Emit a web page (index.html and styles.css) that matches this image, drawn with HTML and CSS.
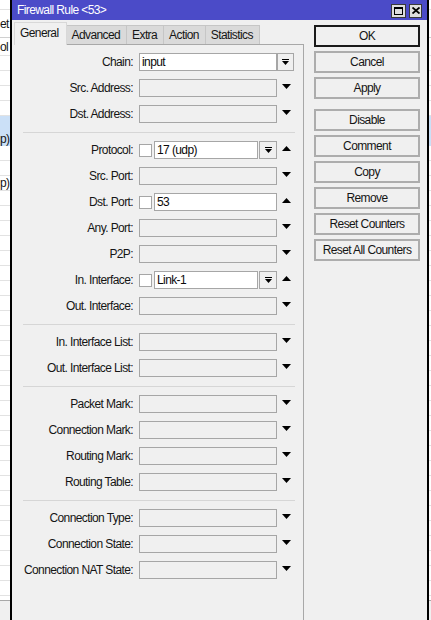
FILE: index.html
```html
<!DOCTYPE html>
<html>
<head>
<meta charset="utf-8">
<link rel="stylesheet" href="styles.css">
</head>
<body>
<div class="desk">
  <div class="strip left">
    <div class="srow top"></div>
    <div class="srow head"><span>et</span></div>
    <div class="srow h16"><span>ol</span></div>
    <div class="srow"></div>
    <div class="srow"></div>
    <div class="srow"></div>
    <div class="srow"></div>
    <div class="srow sel nob"></div>
    <div class="srow sel"><span>p)</span></div>
    <div class="srow"></div>
    <div class="srow"></div>
    <div class="srow"><span>p)</span></div>
    <div class="sfill"></div>
    <div class="sbottom"></div>
  </div>

  <div class="win">
    <div class="titlebar">
      <span class="title">Firewall Rule &lt;53&gt;</span>
      <div class="wbtns">
        <span class="wbtn max"><svg width="9" height="8" viewBox="0 0 9 8"><path d="M0 0H9V8H0Z M1 2V7H8V2Z" fill="#000" fill-rule="evenodd"/></svg></span>
        <span class="wbtn close"><svg width="8" height="7" viewBox="0 0 8 7"><path d="M0.5 0.5L7.5 6.5M7.5 0.5L0.5 6.5" stroke="#000" stroke-width="1.8"/></svg></span>
      </div>
    </div>
    <div class="body">
      <div class="tabsarea">
        <div class="tabs">
          <div class="tab active">General</div>
          <div class="tab">Advanced</div>
          <div class="tab">Extra</div>
          <div class="tab">Action</div>
          <div class="tab">Statistics</div>
        </div>
        <div class="panel">
          <div class="row">
            <div class="lbl">Chain:</div>
            <div class="fld"><div class="inp">input</div></div>
            <div class="aux start"><div class="ddb"><svg width="7" height="6" viewBox="0 0 7 6"><rect x="0" y="0" width="7" height="1"/><path d="M0 2H7L3.5 6Z"/></svg></div></div>
          </div>
          <div class="row">
            <div class="lbl">Src. Address:</div>
            <div class="fld"><div class="inp empty"></div></div>
            <div class="aux"><svg class="tri" width="9" height="5" viewBox="0 0 9 5"><path d="M0 0H9L4.5 5Z"/></svg></div>
          </div>
          <div class="row">
            <div class="lbl">Dst. Address:</div>
            <div class="fld"><div class="inp empty"></div></div>
            <div class="aux"><svg class="tri" width="9" height="5" viewBox="0 0 9 5"><path d="M0 0H9L4.5 5Z"/></svg></div>
          </div>
          <div class="sep"></div>
          <div class="row">
            <div class="lbl">Protocol:</div>
            <div class="fld"><div class="cb"></div><div class="inp">17 (udp)</div><div class="ddb in"><svg width="7" height="6" viewBox="0 0 7 6"><rect x="0" y="0" width="7" height="1"/><path d="M0 2H7L3.5 6Z"/></svg></div></div>
            <div class="aux"><svg class="tri" width="9" height="5" viewBox="0 0 9 5"><path d="M0 5H9L4.5 0Z"/></svg></div>
          </div>
          <div class="row">
            <div class="lbl">Src. Port:</div>
            <div class="fld"><div class="inp empty"></div></div>
            <div class="aux"><svg class="tri" width="9" height="5" viewBox="0 0 9 5"><path d="M0 0H9L4.5 5Z"/></svg></div>
          </div>
          <div class="row">
            <div class="lbl">Dst. Port:</div>
            <div class="fld"><div class="cb"></div><div class="inp">53</div></div>
            <div class="aux"><svg class="tri" width="9" height="5" viewBox="0 0 9 5"><path d="M0 5H9L4.5 0Z"/></svg></div>
          </div>
          <div class="row">
            <div class="lbl">Any. Port:</div>
            <div class="fld"><div class="inp empty"></div></div>
            <div class="aux"><svg class="tri" width="9" height="5" viewBox="0 0 9 5"><path d="M0 0H9L4.5 5Z"/></svg></div>
          </div>
          <div class="row">
            <div class="lbl">P2P:</div>
            <div class="fld"><div class="inp empty"></div></div>
            <div class="aux"><svg class="tri" width="9" height="5" viewBox="0 0 9 5"><path d="M0 0H9L4.5 5Z"/></svg></div>
          </div>
          <div class="row">
            <div class="lbl">In. Interface:</div>
            <div class="fld"><div class="cb"></div><div class="inp">Link-1</div><div class="ddb in"><svg width="7" height="6" viewBox="0 0 7 6"><rect x="0" y="0" width="7" height="1"/><path d="M0 2H7L3.5 6Z"/></svg></div></div>
            <div class="aux"><svg class="tri" width="9" height="5" viewBox="0 0 9 5"><path d="M0 5H9L4.5 0Z"/></svg></div>
          </div>
          <div class="row">
            <div class="lbl">Out. Interface:</div>
            <div class="fld"><div class="inp empty"></div></div>
            <div class="aux"><svg class="tri" width="9" height="5" viewBox="0 0 9 5"><path d="M0 0H9L4.5 5Z"/></svg></div>
          </div>
          <div class="sep"></div>
          <div class="row">
            <div class="lbl">In. Interface List:</div>
            <div class="fld"><div class="inp empty"></div></div>
            <div class="aux"><svg class="tri" width="9" height="5" viewBox="0 0 9 5"><path d="M0 0H9L4.5 5Z"/></svg></div>
          </div>
          <div class="row">
            <div class="lbl">Out. Interface List:</div>
            <div class="fld"><div class="inp empty"></div></div>
            <div class="aux"><svg class="tri" width="9" height="5" viewBox="0 0 9 5"><path d="M0 0H9L4.5 5Z"/></svg></div>
          </div>
          <div class="sep"></div>
          <div class="row">
            <div class="lbl">Packet Mark:</div>
            <div class="fld"><div class="inp empty"></div></div>
            <div class="aux"><svg class="tri" width="9" height="5" viewBox="0 0 9 5"><path d="M0 0H9L4.5 5Z"/></svg></div>
          </div>
          <div class="row">
            <div class="lbl">Connection Mark:</div>
            <div class="fld"><div class="inp empty"></div></div>
            <div class="aux"><svg class="tri" width="9" height="5" viewBox="0 0 9 5"><path d="M0 0H9L4.5 5Z"/></svg></div>
          </div>
          <div class="row">
            <div class="lbl">Routing Mark:</div>
            <div class="fld"><div class="inp empty"></div></div>
            <div class="aux"><svg class="tri" width="9" height="5" viewBox="0 0 9 5"><path d="M0 0H9L4.5 5Z"/></svg></div>
          </div>
          <div class="row">
            <div class="lbl">Routing Table:</div>
            <div class="fld"><div class="inp empty"></div></div>
            <div class="aux"><svg class="tri" width="9" height="5" viewBox="0 0 9 5"><path d="M0 0H9L4.5 5Z"/></svg></div>
          </div>
          <div class="sep"></div>
          <div class="row">
            <div class="lbl">Connection Type:</div>
            <div class="fld"><div class="inp empty"></div></div>
            <div class="aux"><svg class="tri" width="9" height="5" viewBox="0 0 9 5"><path d="M0 0H9L4.5 5Z"/></svg></div>
          </div>
          <div class="row">
            <div class="lbl">Connection State:</div>
            <div class="fld"><div class="inp empty"></div></div>
            <div class="aux"><svg class="tri" width="9" height="5" viewBox="0 0 9 5"><path d="M0 0H9L4.5 5Z"/></svg></div>
          </div>
          <div class="row">
            <div class="lbl">Connection NAT State:</div>
            <div class="fld"><div class="inp empty"></div></div>
            <div class="aux"><svg class="tri" width="9" height="5" viewBox="0 0 9 5"><path d="M0 0H9L4.5 5Z"/></svg></div>
          </div>
        </div>
      </div>
      <div class="btns">
        <div class="btn def">OK</div>
        <div class="btn">Cancel</div>
        <div class="btn">Apply</div>
        <div class="btn gap">Disable</div>
        <div class="btn">Comment</div>
        <div class="btn">Copy</div>
        <div class="btn">Remove</div>
        <div class="btn">Reset Counters</div>
        <div class="btn">Reset All Counters</div>
      </div>
    </div>
  </div>

  <div class="strip right">
    <div class="srow top"></div>
    <div class="srow head"></div>
    <div class="srow h16"></div>
    <div class="srow"></div>
    <div class="srow"></div>
    <div class="srow"></div>
    <div class="srow"></div>
    <div class="srow sel nob"></div>
    <div class="srow sel"></div>
    <div class="srow"></div>
    <div class="srow"></div>
    <div class="srow"></div>
    <div class="sfill"></div>
    <div class="sbottom"></div>
  </div>
</div>
</body>
</html>
```

FILE: styles.css
```css
html, body {
  margin: 0;
  padding: 0;
}
body {
  width: 431px;
  height: 620px;
  overflow: hidden;
  background: #fff;
  font-family: "Liberation Sans", Arial, sans-serif;
  font-size: 12px;
  letter-spacing: -0.6px;
  color: #151515;
}
.desk {
  display: flex;
  height: 620px;
}

/* background window strips */
.strip {
  display: flex;
  flex-direction: column;
  overflow: hidden;
  background: #fff;
  flex: none;
}
.strip.left { width: 10px; }
.strip.right { width: 2px; }
.srow {
  height: 14px;
  border-bottom: 1px solid #e2e2e2;
  display: flex;
  justify-content: flex-start;
  align-items: center;
  white-space: nowrap;
  flex: none;
}
.srow.top { height: 9px; }
.srow.head { height: 27px; border-bottom-color: #d0d0d0; }
.srow.h16 { height: 17px; }
.srow.sel { background: #cbe0f7; border-bottom: none; height: 15px; }
.sfill {
  flex: 1;
  background: repeating-linear-gradient(to bottom, #fff 0 14px, #e2e2e2 14px 15px);
}
.sbottom {
  height: 19px;
  flex: none;
  background: #f0f0f0;
  border-top: 1px solid #a8a8a8;
}

/* dialog window */
.win {
  width: 415px;
  flex: none;
  border-left: 2px solid #000;
  border-right: 2px solid #000;
  background: #f0f0f0;
  display: flex;
  flex-direction: column;
}
.titlebar {
  height: 20px;
  flex: none;
  background: #4b4bc8;
  color: #fff;
  display: flex;
  align-items: center;
  padding: 0 5px;
}
.title { line-height: 20px; }
.wbtns {
  margin-left: auto;
  display: flex;
  gap: 3px;
  padding-top: 1px;
}
.wbtn {
  height: 14px;
  box-sizing: border-box;
  border: 1px solid #3a3a3a;
  background: #dedede;
  display: flex;
  align-items: center;
  justify-content: center;
}
.wbtn.max { width: 15px; }
.wbtn.close { width: 13px; }

.body {
  flex: 1;
  display: flex;
  padding-left: 2px;
}
.tabsarea {
  width: 290px;
  flex: none;
  display: flex;
  flex-direction: column;
  padding-top: 2px;
}
.tabs {
  display: flex;
  align-items: flex-end;
  height: 22px;
}
.tab {
  height: 19px;
  box-sizing: border-box;
  border: 1px solid #c6c6c6;
  border-bottom: none;
  border-left: none;
  background: #dadada;
  padding: 0 6px 0 5px;
  line-height: 18px;
  white-space: nowrap;
}
.tab.active {
  height: 23px;
  margin-bottom: -1px;
  background: #f0f0f0;
  border-left: 1px solid #dadada;
  border-color: #d8d8d8;
  line-height: 20px;
  position: relative;
  z-index: 1;
  padding: 0 7px 0 5px;
}
.panel {
  flex: 1;
  border-top: 1px solid #a8a8a8;
  border-right: 1px solid #a8a8a8;
  padding-top: 4px;
}
.row {
  display: flex;
  align-items: center;
  height: 26px;
}
.lbl {
  width: 119px;
  text-align: right;
  white-space: nowrap;
  flex: none;
}
.fld {
  width: 138px;
  margin-left: 6px;
  display: flex;
  align-items: center;
  flex: none;
}
.aux {
  width: 18px;
  display: flex;
  align-items: center;
  justify-content: center;
  flex: none;
}
.aux.start { justify-content: flex-start; }
.tri { margin-bottom: 3px; }
.inp {
  flex: 1;
  height: 18px;
  box-sizing: border-box;
  border: 1px solid #a6a6a6;
  background: #fff;
  padding-left: 2px;
  line-height: 16px;
  color: #0a0a0a;
  white-space: nowrap;
  overflow: hidden;
}
.inp.empty { background: #f0f0f0; }
.cb {
  width: 13px;
  height: 13px;
  box-sizing: border-box;
  border: 1px solid #a6a6a6;
  background: #fff;
  margin-right: 2px;
  flex: none;
}
.ddb {
  width: 17px;
  height: 18px;
  box-sizing: border-box;
  border: 1px solid #a6a6a6;
  background: #f0f0f0;
  display: flex;
  align-items: center;
  justify-content: center;
  flex: none;
}
.ddb.in {
  width: 18px;
  margin-left: 1px;
}
.sep {
  height: 10px;
  box-sizing: border-box;
  padding-top: 5px;
  margin-left: 9px;
  width: 272px;
}
.sep::after {
  content: "";
  display: block;
  height: 1px;
  background: #d6d6d6;
}

.btns {
  width: 106px;
  flex: none;
  margin-left: 10px;
  padding-top: 5px;
  display: flex;
  flex-direction: column;
  gap: 4px;
}
.btn {
  height: 22px;
  box-sizing: border-box;
  border: 2px solid #adadad;
  background: #f0f0f0;
  text-align: center;
  line-height: 18px;
  white-space: nowrap;
}
.btn.def { border-color: #1a1a1a; }
.btn.gap { margin-top: 6px; }
```
